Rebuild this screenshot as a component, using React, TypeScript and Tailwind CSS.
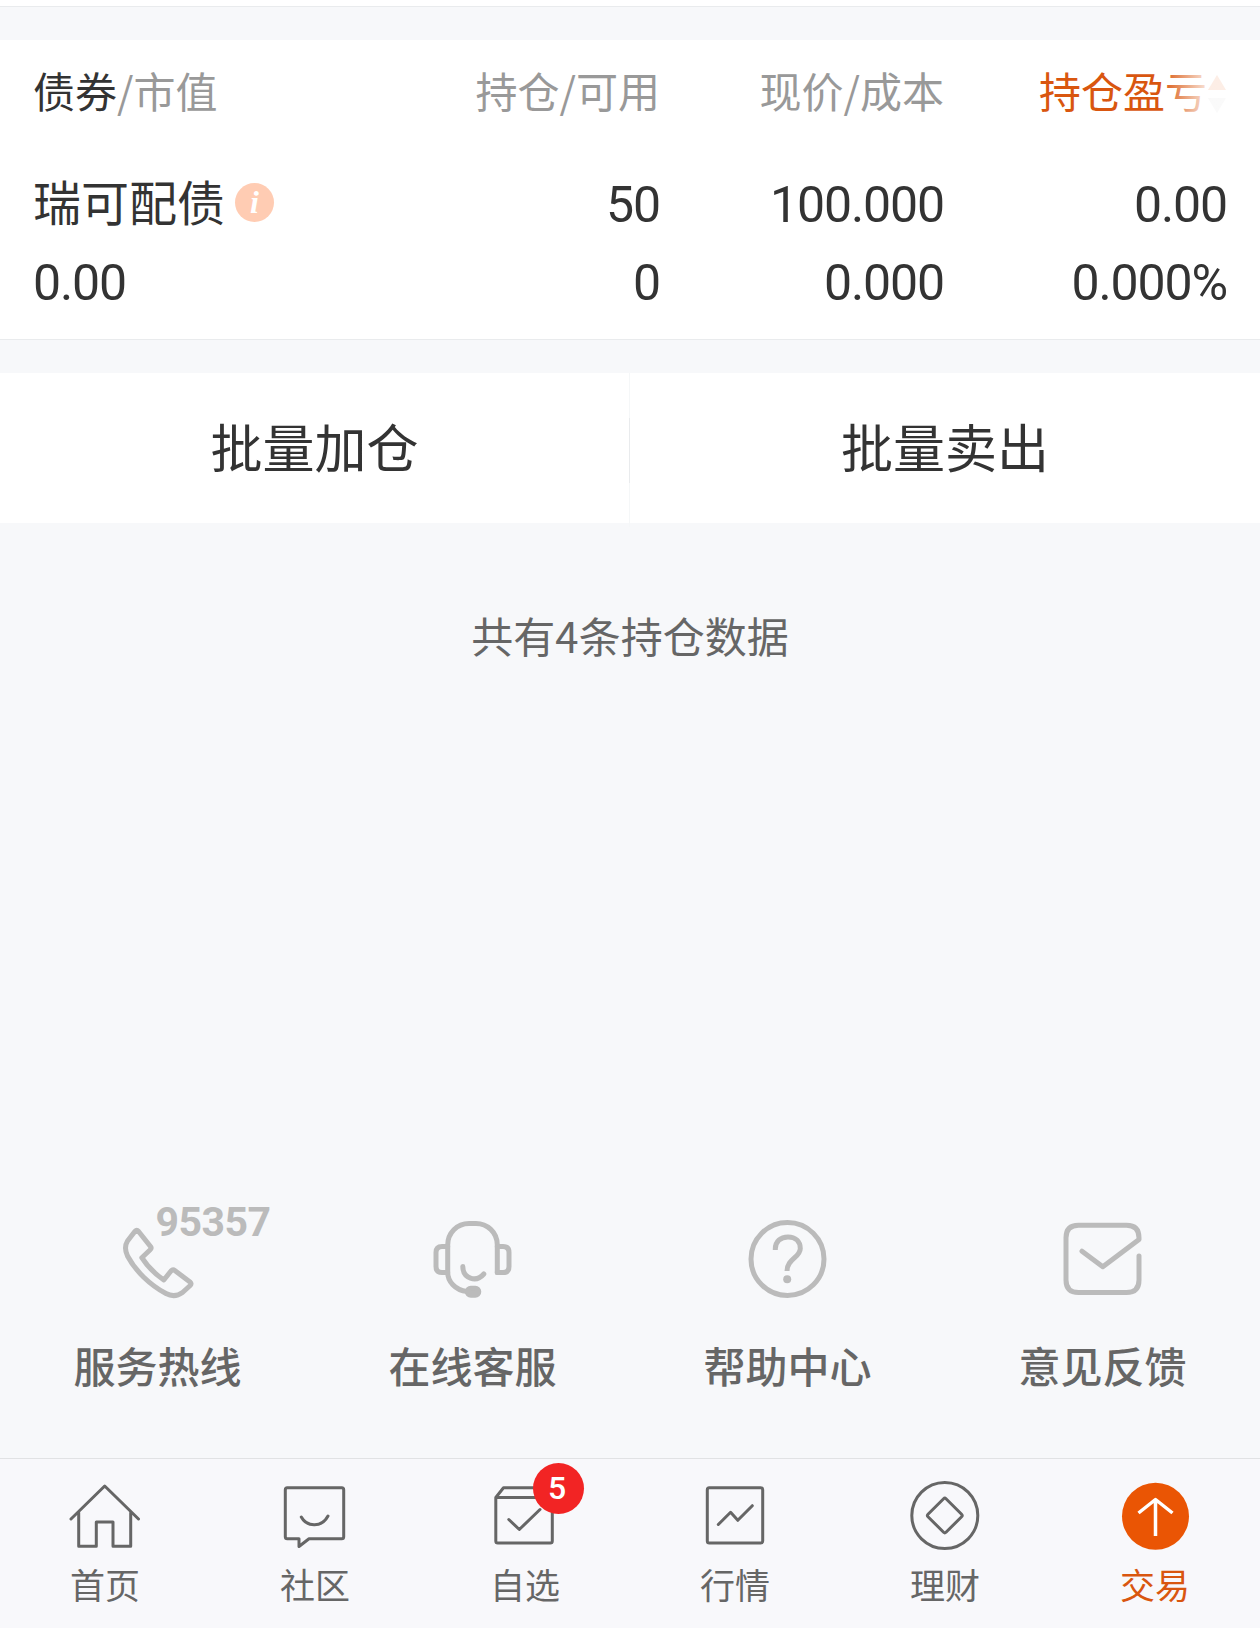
import React from 'react';

type IconProps = { children: React.ReactNode };

const services = [
    { label: '服务热线', icon: <PhoneIcon /> },
    { label: '在线客服', icon: <HeadsetIcon /> },
    { label: '帮助中心', icon: <HelpIcon /> },
    { label: '意见反馈', icon: <MailIcon /> },
];

const tabs = [
    { label: '首页', icon: <HomeIcon /> },
    { label: '社区', icon: <ChatIcon /> },
    { label: '自选', icon: <BoxIcon />, badge: 5 },
    { label: '行情', icon: <ChartIcon /> },
    { label: '理财', icon: <CoinIcon /> },
    { label: '交易', icon: <TradeIcon />, active: true },
];

function ServiceSvg({ children }: IconProps) {
    return (
        <svg width="90" height="90" viewBox="0 0 90 90" fill="none" stroke="#bbbbbb" strokeWidth="5" strokeLinecap="round" strokeLinejoin="round">
            {children}
        </svg>
    );
}

function TabSvg({ children }: IconProps) {
    return (
        <svg width="80" height="80" viewBox="0 0 80 80" fill="none" stroke="#666666" strokeWidth="3" strokeLinecap="round" strokeLinejoin="round">
            {children}
        </svg>
    );
}

function PhoneIcon() {
    return (
        <div className="relative">
            <ServiceSvg>
                <path d="M22 18.2Q23.8 16.5 25.4 18.2L37.5 33.5Q38.8 35.3 37.2 36.8L28.8 44.7Q37 57.5 50.8 67L58 58Q59.8 56 61.8 57.5L77 69Q79 70.7 77.2 72.5L69.500 79.500C64 83.500 59 83.800 53 80.500C37 72 22.500 58 14.500 43Q10.500 34.500 14.500 28Z" />
            </ServiceSvg>
            <span className="absolute left-[43px] top-[-11px] font-['Roboto',sans-serif] text-[41px] leading-[41px] font-bold tracking-[-0.5px] text-[#bbbbbb]">95357</span>
        </div>
    );
}

function HeadsetIcon() {
    return (
        <ServiceSvg>
            <path d="M69.3 59.5V32C69.3 19 59 10.5 48 10.5H41C29 10.5 19.7 20 19.7 32V59.5C19.7 68 27 77.5 39 78.5" />
            <path d="M19.7 33.5H14Q8 33.5 8 39.5V53.5Q8 59.5 14 59.5H19.7M69.3 33.5H75Q81 33.5 81 39.5V53.5Q81 59.5 75 59.5H69.3" />
            <path d="M34.8 53.5C35 65.5 48 70 55.8 61" />
            <rect x="39.3" y="75.2" width="11.5" height="7" rx="3.5" fill="#bbbbbb" />
        </ServiceSvg>
    );
}

function HelpIcon() {
    return (
        <ServiceSvg>
            <circle cx="44.5" cy="46" r="36.5" />
            <path d="M32.3 37V36C32.3 28.5 37.5 23.9 45 23.9C52.5 23.9 57.3 28.5 57.3 35.5C57.3 44.5 44 46 44 58" strokeLinecap="butt" />
            <circle cx="44.2" cy="66.3" r="4" fill="#bbbbbb" stroke="none" />
        </ServiceSvg>
    );
}

function MailIcon() {
    return (
        <ServiceSvg>
            <path d="M81 43V67Q81 79.5 68.5 79.5H20.5Q8 79.5 8 67V24.7Q8 12.2 20.5 12.2H68.5Q81 12.2 81 24.7V26.5L44.8 53.7L24 38.2" />
        </ServiceSvg>
    );
}

function HomeIcon() {
    return (
        <TabSvg>
            <path d="M6 44L39.7 11L73.5 44M13.7 37.5V71.3H31.3V47H48V71.3H65.7V37.5" />
        </TabSvg>
    );
}

function ChatIcon() {
    return (
        <TabSvg>
            <path d="M12.3 12.7H66.7Q68.7 12.7 68.7 14.7V61.7Q68.7 63.7 66.7 63.7H34L24 71.5V63.7H12.3Q10.3 63.7 10.3 61.7V14.7Q10.3 12.7 12.3 12.7Z" />
            <path d="M26.3 42C32 52.5 47 52.5 53 41" />
        </TabSvg>
    );
}

function BoxIcon() {
    return (
        <TabSvg>
            <path d="M10.8 22.5L18.5 12.7H61L67.3 22.5V66Q67.3 68 65.3 68H12.8Q10.8 68 10.8 66ZM10.8 22.5H67.3" />
            <path d="M23.8 44.5L34.3 54.5L55 34.5" />
        </TabSvg>
    );
}

function ChartIcon() {
    return (
        <TabSvg>
            <rect x="12.3" y="12.7" width="55.4" height="55.3" rx="2" />
            <path d="M23.3 49.5L35.6 37.3L42.8 45.3L57.3 30.7" />
        </TabSvg>
    );
}

function CoinIcon() {
    return (
        <TabSvg>
            <circle cx="39.8" cy="40.5" r="33" />
            <path d="M38.6 23.7Q39.8 22.5 41 23.7L56.6 39.3Q57.8 40.5 56.6 41.7L41 57.3Q39.8 58.5 38.6 57.3L23 41.7Q21.8 40.5 23 39.3Z" />
        </TabSvg>
    );
}

function TradeIcon() {
    return (
        <TabSvg>
            <circle cx="40.5" cy="41.3" r="33.5" fill="#ea5504" stroke="none" />
            <path d="M40.5 61V25M23.5 38L40.5 24.5L57.5 38" stroke="#ffffff" strokeWidth="3.5" strokeLinecap="butt" />
        </TabSvg>
    );
}

const Holdings: React.FC = () => {
    return (
        <section className="h-[300px] shrink-0 bg-white border-b border-[#e9ebed] px-[33px]">
            {/* 表头 */}
            <div className="grid grid-cols-[343px_284px_284px_283px] h-[98px] pt-px text-right text-[42px] leading-[98px] text-[#999999]">
                <p className="text-left">
                    <span className="text-[#333333]">债券</span>/市值
                </p>
                <p>持仓/可用</p>
                <p>现价/成本</p>
                <div className="relative flex justify-end items-center text-[#d9560f]">
                    <span className="mr-[20px]">持仓盈亏</span>
                    <svg className="absolute right-0 top-[34px]" width="20" height="38" viewBox="0 0 20 38">
                        <path d="M10 0L19 15H1Z" fill="#ea5504" />
                        <path d="M10 38L1 23H19Z" fill="#cccccc" />
                    </svg>
                    <div className="absolute right-0 top-0 h-[96px] w-[66px] bg-linear-to-r from-white/0 to-white/90 to-75%" />
                </div>
            </div>

            {/* 持仓 */}
            <div className="grid grid-cols-[343px_284px_284px_283px] pt-[28px] text-right font-['Roboto',sans-serif] text-[50px] leading-[78px] tracking-[-1.1px] text-[#333333]">
                <div className="flex h-[72px] items-center text-left font-['Noto_Sans_CJK_SC',sans-serif] text-[48px] tracking-normal">
                    <span className="-mt-[4px]">瑞可配债</span>
                    <span className="ml-[10px] mt-px flex size-[39px] items-center justify-center rounded-full bg-[#ffccb3] font-['Liberation_Serif',serif] text-[32px] leading-[39px] font-bold italic text-white">i</span>
                </div>
                <p>50</p>
                <p>100.000</p>
                <p>0.00</p>
                <p className="text-left">0.00</p>
                <p>0</p>
                <p>0.000</p>
                <p>0.000%</p>
            </div>
        </section>
    );
};

const App: React.FC = () => {
    return (
        <div className="flex h-[1628px] w-[1260px] flex-col overflow-hidden bg-[#f7f8fa] font-['Noto_Sans_CJK_SC',sans-serif]">
            <div className="mb-[33px] h-[7px] shrink-0 border-b border-[#e9ebed] bg-white" />
            <Holdings />

            {/* 批量操作 */}
            <div className="mt-[33px] grid h-[150px] shrink-0 grid-cols-[629px_1px_630px] items-center bg-white text-center text-[52px] leading-[146px] text-[#333333]">
                <button className="pb-[8px]">批量加仓</button>
                <div className="flex h-full items-center bg-[#f5f7f8]">
                    <div className="h-[65px] w-px bg-[#e9ebed]" />
                </div>
                <button className="pb-[8px]">批量卖出</button>
            </div>

            <p className="mt-[82px] text-center text-[42px] leading-[60px] text-[#666666]">共有4条持仓数据</p>

            {/* 客服入口 */}
            <div className="mt-auto grid h-[245px] shrink-0 grid-cols-4">
                {services.map((item) => (
                    <div key={item.label} className="flex flex-col items-center">
                        {item.icon}
                        <p className="mt-[32px] text-[42px] leading-[60px] font-medium text-[#666666]">{item.label}</p>
                    </div>
                ))}
            </div>

            {/* 底部导航 */}
            <nav className="grid h-[170px] shrink-0 grid-cols-6 border-t border-[#e1e2e4] bg-[#f8f8fb]">
                {tabs.map((tab) => (
                    <div key={tab.label} className="flex flex-col items-center pt-[16px]">
                        <div className="relative">
                            {tab.icon}
                            {tab.badge && (
                                <span className="absolute left-[47.5px] top-[-12px] flex size-[51px] items-center justify-center rounded-full bg-[#f22424] pr-[2px] font-['Roboto',sans-serif] text-[32px] leading-[51px] font-medium text-white">{tab.badge}</span>
                            )}
                        </div>
                        <p className={tab.active ? 'mt-[4px] text-[35px] leading-[50px] text-[#d9560f]' : 'mt-[4px] text-[35px] leading-[50px] text-[#666666]'}>{tab.label}</p>
                    </div>
                ))}
            </nav>
        </div>
    );
};

export default App;
